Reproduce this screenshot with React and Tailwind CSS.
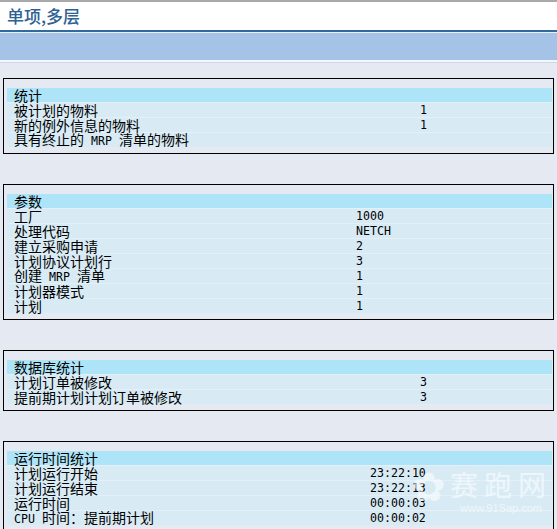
import React from "react";

const sections = [
  {
    title: "统计",
    col: "w-[406px]",
    rows: [
      ["被计划的物料", "1"],
      ["新的例外信息的物料", "1"],
      ["具有终止的 MRP 清单的物料", ""],
    ],
  },
  {
    title: "参数",
    col: "w-[342px]",
    rows: [
      ["工厂", "1000"],
      ["处理代码", "NETCH"],
      ["建立采购申请", "2"],
      ["计划协议计划行", "3"],
      ["创建 MRP 清单", "1"],
      ["计划器模式", "1"],
      ["计划", "1"],
    ],
  },
  {
    title: "数据库统计",
    col: "w-[406px]",
    rows: [
      ["计划订单被修改", "3"],
      ["提前期计划计划订单被修改", "3"],
    ],
  },
  {
    title: "运行时间统计",
    col: "w-[356px]",
    rows: [
      ["计划运行开始", "23:22:10"],
      ["计划运行结束", "23:22:13"],
      ["运行时间", "00:00:03"],
      ["CPU 时间：提前期计划", "00:00:02"],
    ],
  },
];

// latin bits inside labels are drawn half-width like the SAP list font
const Label = ({ text }) => {
  const parts = text.split(/([A-Za-z]+)/);
  return (
    <span className="whitespace-pre">
      {parts.map((p, i) =>
        /^[A-Za-z]+$/.test(p) ? (
          <span key={i} className="font-['DejaVu_Sans_Mono',monospace] text-[11.6px]">
            {p}
          </span>
        ) : (
          <span key={i}>{p.replace(/ /g, "\u2002")}</span>
        )
      )}
    </span>
  );
};

const Section = ({ s }) => (
  <div className="mx-[3px] border border-black pt-[9px] pb-[6px] pl-[3px] pr-[1px]">
    <div className="h-[14px] bg-[#ade4f8] pl-[7px] leading-[14px]">{s.title}</div>
    {s.rows.map(([label, value], i) => (
      <div
        key={i}
        className="flex h-[15px] items-center border-t border-[#e3f0f7] bg-[#d8ebf5] pl-[7px]"
      >
        <div className={"shrink-0 leading-[14px] " + s.col}>
          <Label text={label} />
        </div>
        <div className="font-['DejaVu_Sans_Mono',monospace] text-[11.6px] leading-[14px]">
          {value}
        </div>
      </div>
    ))}
  </div>
);

export default function App() {
  return (
    <div className="relative min-h-[529px] bg-[#e5e9f1] font-['Noto_Sans_CJK_SC',sans-serif] text-[14px] text-black">
      <div className="h-[2px] bg-[#a9a9a9]" />
      <div className="h-[28px] bg-white pl-[7px] pt-[4px] text-[17px] font-medium leading-[20px] text-[#2d6293]">
        单项,多层
      </div>
      <div className="h-[2px] bg-[#336a9c]" />
      <div className="h-px bg-[#e9f0f9]" />
      <div className="h-[27px] bg-[#a5c3e6]" />
      <div className="h-[2px] bg-[#f3f6fb]" />
      <div className="h-px bg-[#c9daee]" />
      <div className="flex flex-col gap-[30px] pt-[15px]">
        {sections.map((s) => (
          <Section key={s.title} s={s} />
        ))}
      </div>
      <div className="pointer-events-none absolute left-[412px] top-[466px] flex items-start gap-[4px] whitespace-nowrap text-white/55">
        <div className="font-['Liberation_Serif',serif] text-[40px] leading-[44px]">✿</div>
        <div className="flex flex-col items-center">
          <div className="font-['Noto_Sans_CJK_SC',serif] text-[28px] leading-[36px] tracking-[6px]">
            赛跑网
          </div>
          <div className="font-['Liberation_Sans',sans-serif] text-[11px] leading-[12px]">
            www.91Sap.com
          </div>
        </div>
      </div>
    </div>
  );
}
